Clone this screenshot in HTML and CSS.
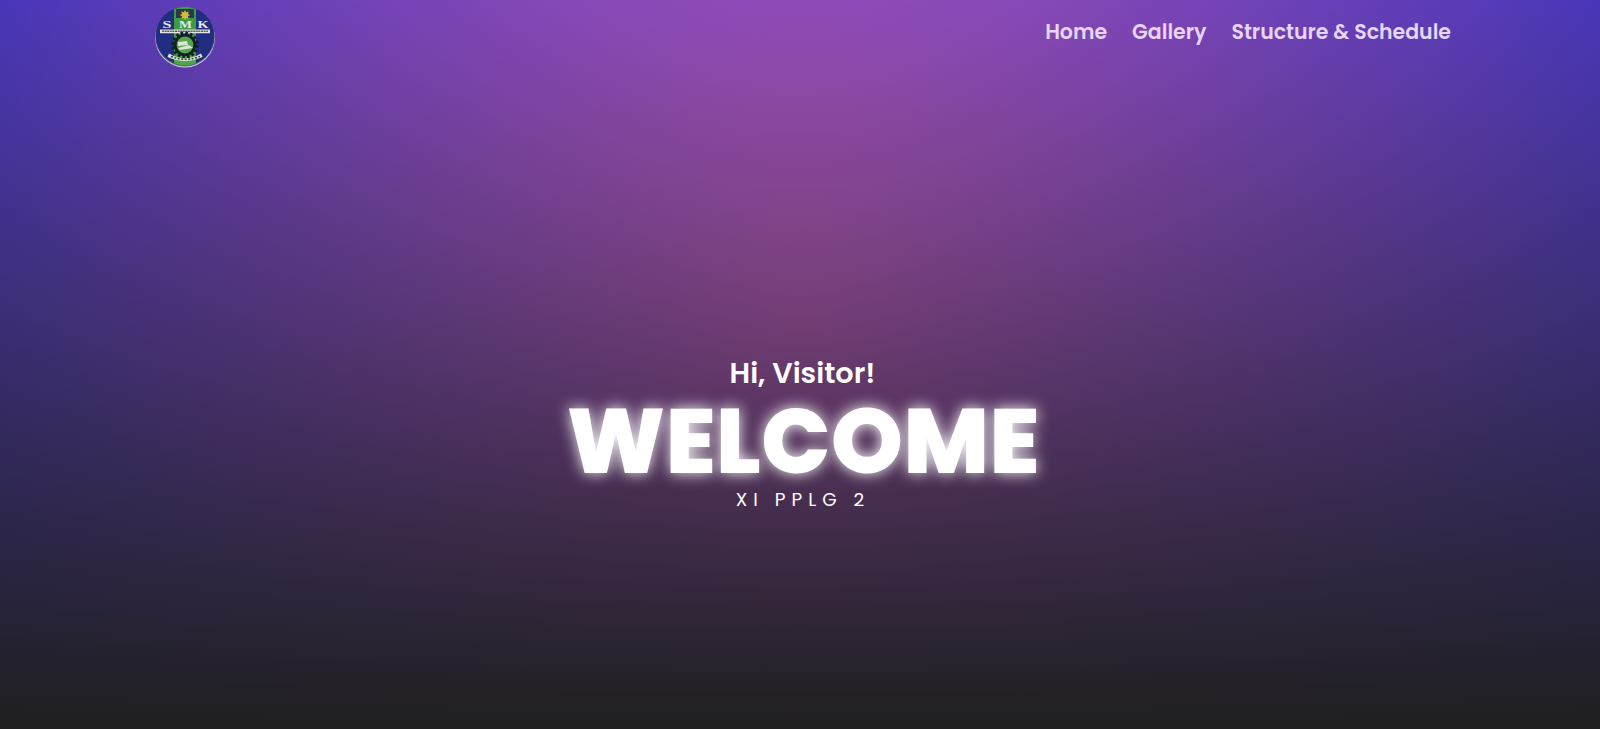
FILE: index.html
```
<!DOCTYPE html>
<html lang="en">
<head>
<meta charset="utf-8">
<title>XI PPLG 2</title>
<link rel="stylesheet" href="styles.css">
</head>
<body>
<div class="page">
  <header class="navbar">
    <a class="brand" href="#" aria-label="SMK">
      <svg class="logo" viewBox="0 0 62 62">
        <defs><clipPath id="disc"><circle cx="31" cy="30" r="29.3"/></clipPath></defs>
        <circle cx="31" cy="31.8" r="29.8" fill="#d4d6dc"/>
        <circle cx="31" cy="30.8" r="29.6" fill="#60677c"/>
        <g clip-path="url(#disc)">
          <rect width="62" height="62" fill="#202d80"/>
          <path d="M20 0h22v62H20z" fill="#3f9a42"/>
          <path d="M22 3h18v9H22z" fill="#263b50"/>
          <path d="M20 50h22v12H20z" fill="#4da746"/>
        </g>
        <path d="M31 4l1.200 2.200 2.500-.8-.8 2.500 2.300 1.100-2.300 1.200.8 2.500-2.500-.8L31 14l-1.200-2.100-2.500.8.8-2.500L25.800 9l2.300-1.100-.8-2.500 2.500.8z" fill="#d1bd39"/>
        <g class="logo-letters"><text x="13" y="22" textLength="9" lengthAdjust="spacingAndGlyphs">S</text><text x="31.5" y="22" textLength="13" lengthAdjust="spacingAndGlyphs">M</text><text x="49" y="22" textLength="11" lengthAdjust="spacingAndGlyphs">K</text></g>
        <path d="M6 23.400h50v3.800H6z" fill="#e2e5e2"/>
        <path d="M8 25.300h46" stroke="#54605d" stroke-width="1.5" stroke-dasharray="2 .6"/>
        <circle cx="31" cy="39" r="12.2" fill="none" stroke="#101f24" stroke-width="2.8" stroke-dasharray="2.6 2.19"/>
        <circle cx="31" cy="39" r="9.8" fill="#53a64d" stroke="#101f24" stroke-width="2.8"/>
        <path d="M24 36l9-1 1 4-10 1zM24 42l11-3 4 3-13 2z" fill="#d9e5d4"/>
        <path d="M15 47.500Q31 57 47 47.500l1.500 3.500Q31 59 13.500 51z" fill="#dfe2d9"/>
        <path d="M17 50.500Q31 56 46 50.500" fill="none" stroke="#2c393e" stroke-width="1.4" stroke-dasharray="2 1.500"/>
      </svg>
    </a>
    <nav class="menu">
      <a class="link" href="#">Home</a>
      <a class="link" href="#">Gallery</a>
      <a class="link" href="#">Structure &amp; Schedule</a>
    </nav>
  </header>
  <main class="hero">
    <p class="greeting">Hi, Visitor!</p>
    <h1 class="title">WELCOME</h1>
    <p class="class-name">XI PPLG 2</p>
  </main>
</div>
</body>
</html>
```
FILE: styles.css
```
* { box-sizing: border-box; }
body { margin: 0; background: #1f1f1f; }
.page {
  height: 729px;
  overflow: hidden;
  color: #fff;
  font-family: Poppins, Inter, sans-serif;
  background:
    linear-gradient(rgba(115, 40, 190, .5), #1f1f1f),
    radial-gradient(circle at 50% 42%, rgb(250, 132, 177), rgb(18, 66, 180));
}
.navbar {
  height: 74px;
  padding: 6px 149px 0 154px;
  display: flex;
  justify-content: space-between;
  align-items: flex-start;
}
.brand { display: block; height: 62px; }
.logo { display: block; width: 62px; height: 62px; }
.logo-letters { fill: #e6e8f1; font: bold 11px "Liberation Serif", serif; text-anchor: middle; }
.menu { display: flex; gap: 25px; padding-top: 11px; }
.link {
  color: #e6d5f5;
  font-size: 20.5px;
  line-height: 30px;
  font-weight: 600;
  text-decoration: none;
  white-space: nowrap;
}
.hero { padding-top: 278px; display: flex; flex-direction: column; align-items: center; }
.greeting { margin: 0; font-size: 28.7px; line-height: 43px; font-weight: 600; padding-left: 5px; }
.title {
  margin: 0;
  padding-left: 6px;
  font-size: 92px;
  line-height: 92px;
  font-weight: 800;
  text-shadow: 0 0 15px #fff;
}
.class-name { margin: 0; font-size: 18.5px; line-height: 26px; letter-spacing: 6px; padding-left: 6px; }
```
